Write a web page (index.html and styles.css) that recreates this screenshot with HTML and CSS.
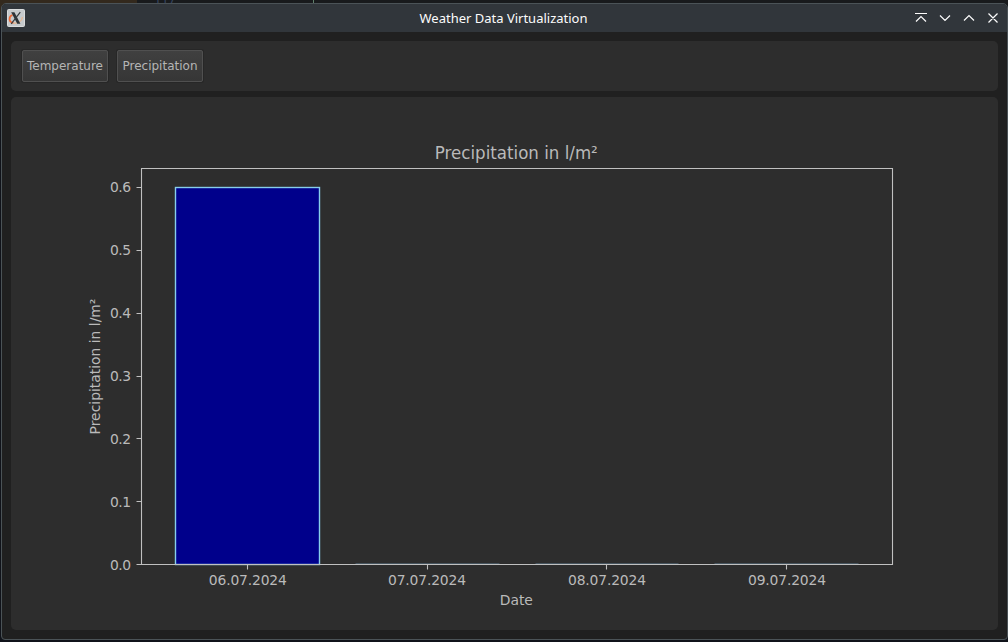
FILE: index.html
```html
<!DOCTYPE html>
<html lang="en">
<head>
<meta charset="utf-8">
<title>Weather Data Virtualization</title>
<link rel="stylesheet" href="styles.css">
</head>
<body>
<div class="backdrop" aria-hidden="true"><span class="backdrop-line">117</span><i class="caret"></i></div>
<div class="window">
  <header class="titlebar">
    <svg class="app-icon" width="18" height="18" viewBox="0 0 18 18">
      <rect x=".5" y=".5" width="17" height="17" rx="1" fill="#c6cacc" stroke="#dadcdd"/>
      <path d="M5.500 6C1.300 7.500 1.500 13.500 6.500 13.800" fill="none" stroke="#ee6834" stroke-width="1.7"/>
      <path d="M6.500 14C11 15 15 12 15.500 8" fill="none" stroke="#e8b58c" stroke-width="1.2"/>
      <path d="M4.200 3.200h3.200l6 11.600h-3.200z" fill="#2d3337"/>
      <path d="M13.300 3.200L4.200 14.800" stroke="#343a3e" stroke-width="1.2"/>
    </svg>
    <h1 class="window-title">Weather Data Virtualization</h1>
    <svg class="controls" width="86" height="14" viewBox="0 0 86 14">
      <path d="M1 2.500h12M2 10.500l5-5 5 5M26 4.500l5 5 5-5M50 9.500l5-5 5 5M74.500 2.500l9 9M83.500 2.500l-9 9"/>
    </svg>
  </header>
  <main class="content">
    <nav class="panel toolbar">
      <button class="button">Temperature</button>
      <button class="button">Precipitation</button>
    </nav>
    <section class="panel chart-panel">
      <svg class="chart" width="987" height="533" viewBox="11 97 987 533">
        <rect class="bar" x="175.500" y="187.500" width="144" height="377"/>
        <path class="zero-bar" d="M355.500 563.500h144M535.500 563.500h143M714.500 563.500h144"/>
        <path class="axis" d="M141.500 168.500h751v396h-751zM136.500 187.500h5M136.500 250.500h5M136.500 313.500h5M136.500 376.500h5M136.500 438.500h5M136.500 501.500h5M136.500 564.500h5M247.500 564.500v5M427.500 564.500v5M606.500 564.500v5M786.500 564.500v5"/>
        <g class="label end">
          <text x="131" y="192" textLength="21">0.6</text>
          <text x="131" y="255" textLength="21">0.5</text>
          <text x="131" y="318" textLength="21">0.4</text>
          <text x="131" y="381" textLength="21">0.3</text>
          <text x="131" y="444" textLength="21">0.2</text>
          <text x="131" y="507" textLength="21">0.1</text>
          <text x="131" y="570" textLength="21">0.0</text>
        </g>
        <g class="label middle">
          <text x="247.800" y="585" textLength="78">06.07.2024</text>
          <text x="427" y="585" textLength="78">07.07.2024</text>
          <text x="607" y="585" textLength="78">08.07.2024</text>
          <text x="787" y="585" textLength="78">09.07.2024</text>
          <text x="516.300" y="605">Date</text>
          <text transform="translate(100 366.500) rotate(-90)">Precipitation in l/m²</text>
          <text class="chart-title" x="516.300" y="159" textLength="163" lengthAdjust="spacingAndGlyphs">Precipitation in l/m²</text>
        </g>
      </svg>
    </section>
  </main>
</div>
</body>
</html>
```
FILE: styles.css
```css
* { box-sizing: border-box; }
body {
  margin: 0;
  width: 1008px;
  height: 642px;
  overflow: hidden;
  position: relative;
  padding: 3px 0 2px 1px;
  background: #10131a;
  font-family: "DejaVu Sans", sans-serif;
}
.backdrop {
  position: absolute;
  inset: 0 0 auto 0;
  height: 20px;
  overflow: hidden;
  background: linear-gradient(90deg, #33291d 137px, #181a1c 137px);
}
.backdrop-line {
  position: absolute;
  left: 154px;
  top: -7px;
  font: 12px/14px "DejaVu Sans Mono", monospace;
  color: #36455f;
}
.caret {
  position: absolute;
  left: 313px;
  top: 0;
  width: 1px;
  height: 3px;
  background: #60806b;
}
.window {
  position: relative;
  height: 637px;
  display: flex;
  flex-direction: column;
  border: 1px solid #4b5357;
  border-radius: 5px 5px 4px 4px;
  overflow: hidden;
  background: #202020;
}
.titlebar {
  height: 28px;
  flex: none;
  display: grid;
  grid-template-columns: 86px 1fr 86px;
  align-items: center;
  padding: 0 7px 0 5px;
  background: #31363b;
}
.app-icon { display: block; }
.window-title {
  margin: 0;
  text-align: center;
  font: 400 13px/18px "Noto Sans", sans-serif;
  color: #fcfcfc;
}
.controls {
  display: block;
  fill: none;
  stroke: #fcfcfc;
  stroke-width: 1.2;
}
.content {
  flex: 1;
  display: flex;
  flex-direction: column;
  gap: 6px;
  padding: 9px 9px 9px 9px;
}
.panel {
  background: #2d2d2d;
  border-radius: 5px;
}
.toolbar {
  height: 50px;
  display: flex;
  align-items: center;
  gap: 9px;
  padding: 0 11px;
}
.button {
  width: 86px;
  height: 32px;
  padding: 0;
  border: 1px solid #505050;
  border-radius: 2px;
  background: linear-gradient(#404040, #363636);
  box-shadow: 0 0 0 1px #272727;
  font: 12px/16px "DejaVu Sans", sans-serif;
  color: #b5b5b5;
  white-space: nowrap;
}
.chart-panel {
  height: 533px;
  overflow: hidden;
}
.chart { display: block; }
.bar { fill: #00008b; stroke: #87ceeb; stroke-width: 1.4; }
.zero-bar { fill: none; stroke: #46545e; }
.axis { fill: none; stroke: #c0c0c0; stroke-width: 1.1; }
.label { font-size: 13.89px; fill: #bababa; }
.end { text-anchor: end; }
.middle { text-anchor: middle; }
.label .chart-title { font-size: 17px; }
```
